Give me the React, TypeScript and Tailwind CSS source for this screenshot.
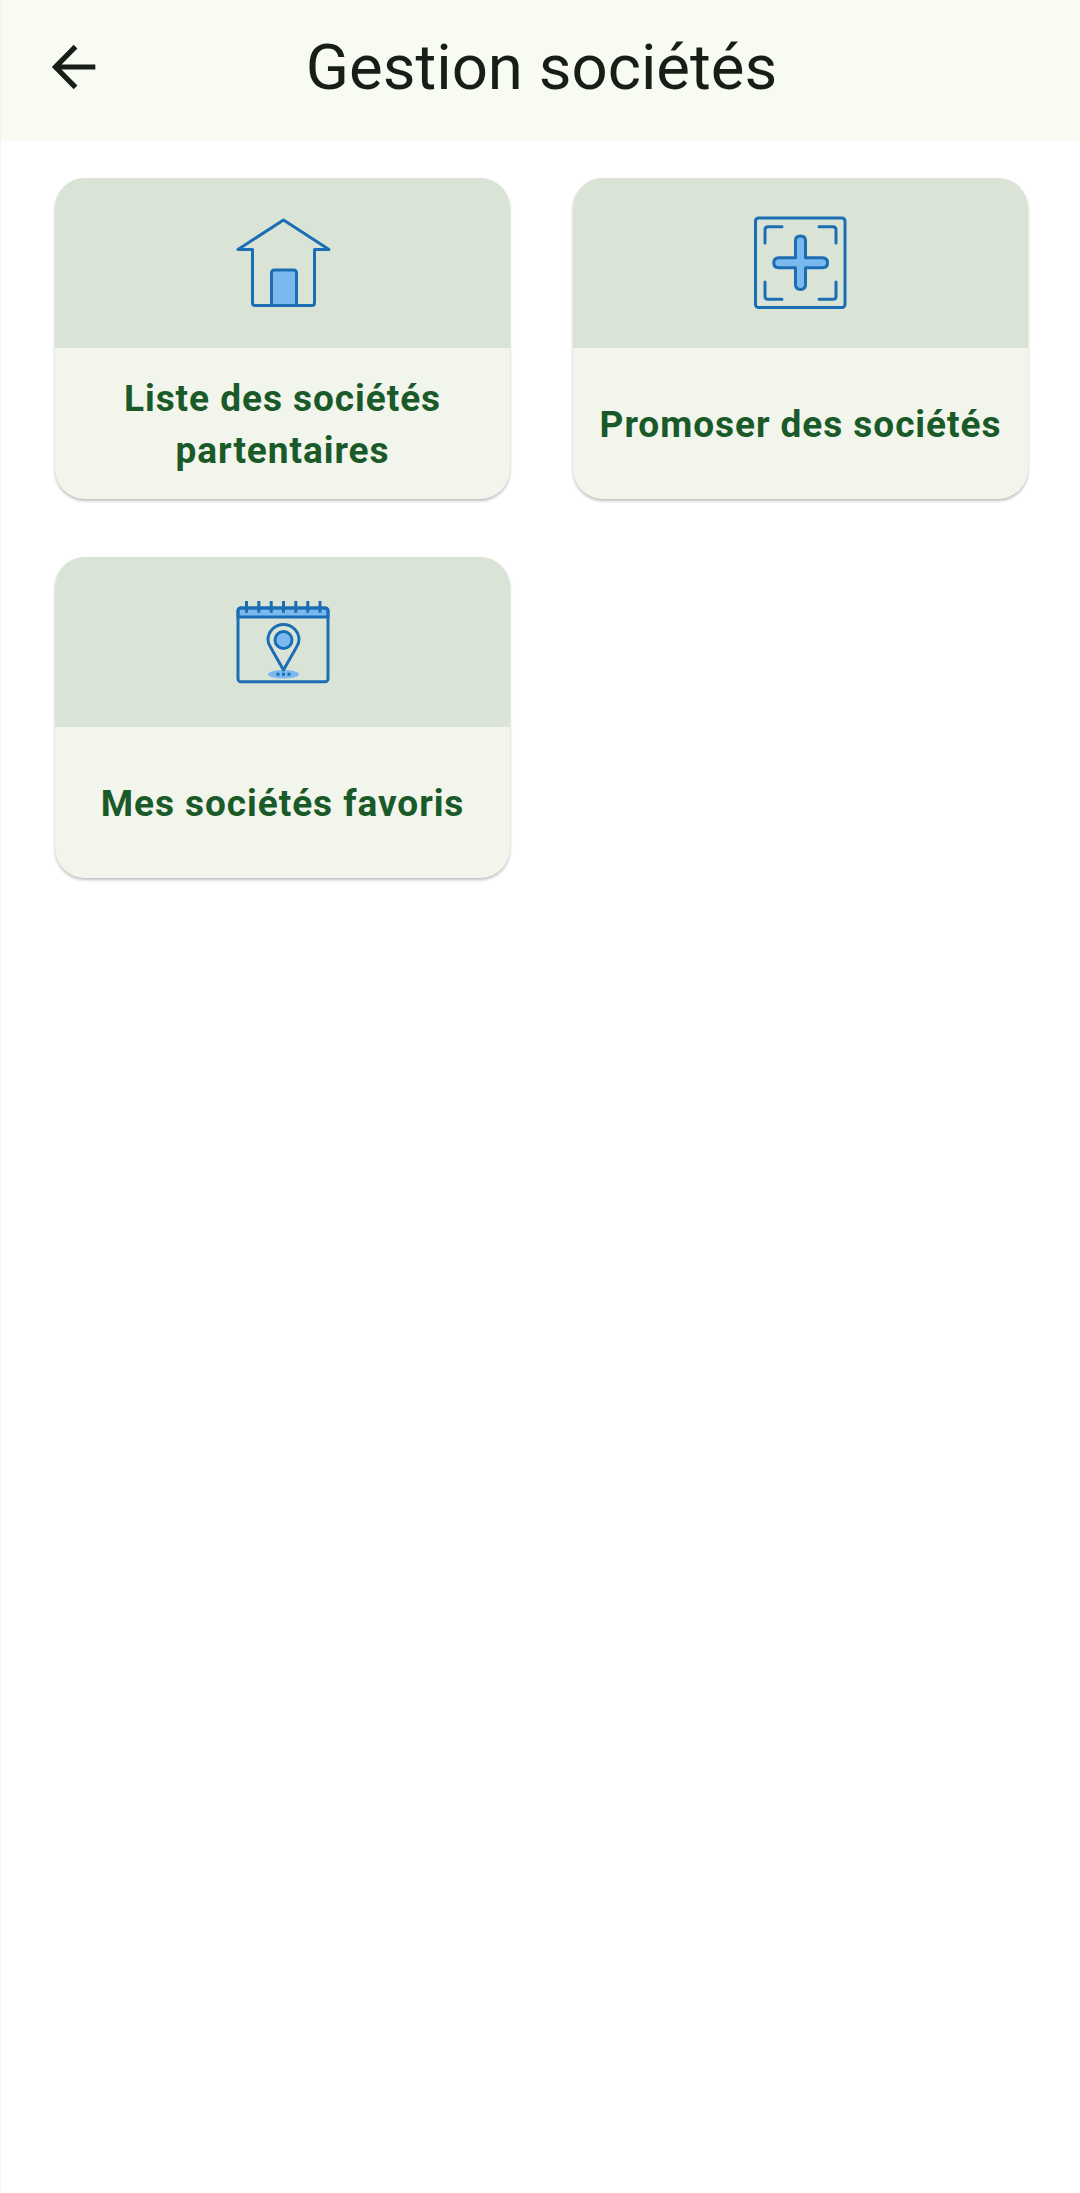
import React from 'react';

const HomeIcon = () => (
  <svg width="96" height="96" viewBox="0 0 96 96" fill="none" stroke="#1c6eb4" strokeWidth="3" strokeLinejoin="round" strokeLinecap="round">
    <path d="M48.5 5 L3 34.5 H17.5 V88 Q17.5 90.5 20 90.5 H77 Q79.5 90.5 79.5 88 V34.5 H94 Z" />
    <path d="M36.5 90.5 V58 Q36.5 55 39.5 55 H58.5 Q61.5 55 61.5 58 V90.5 Z" fill="#7ab8ee" />
  </svg>
);

const AddIcon = () => (
  <svg width="96" height="96" viewBox="0 0 96 96" fill="none" stroke="#1c6eb4" strokeWidth="3" strokeLinejoin="round" strokeLinecap="round">
    <rect x="2.5" y="3" width="89.5" height="89.5" rx="3" />
    <path d="M12 28 V14.7 Q12 11.7 15 11.7 H29 M66 11.7 H80 Q83 11.7 83 14.7 V28 M12 67 V81.3 Q12 84.3 15 84.3 H29 M66 84.3 H80 Q83 84.3 83 81.3 V67" />
    <path
      d="M42.5 25.7 Q42.5 21 47.5 21 Q52.5 21 52.5 25.7 V42.8 H69.5 Q74.5 42.8 74.5 47.8 Q74.5 52.8 69.5 52.8 H52.5 V69.5 Q52.5 74.5 47.5 74.5 Q42.5 74.5 42.5 69.5 V52.8 H25.8 Q20.8 52.8 20.8 47.8 Q20.8 42.8 25.8 42.8 H42.5 Z"
      fill="#7ab8ee"
    />
  </svg>
);

const CalendarIcon = () => (
  <svg width="96" height="96" viewBox="0 0 96 96" fill="none" stroke="#1c6eb4" strokeWidth="3" strokeLinejoin="round" strokeLinecap="round">
    <path d="M3 23 V17 Q3 14 6 14 H90 Q93 14 93 17 V23 Z" fill="#7ab8ee" />
    <rect x="3" y="14" width="90" height="73.7" rx="3" />
    <path d="M11.5 7 V18.7 M23.8 7 V18.7 M36.2 7 V18.7 M48.5 7 V18.7 M60.8 7 V18.7 M72.8 7 V18.7 M85 7 V18.7" strokeLinecap="butt" />
    <ellipse cx="48.5" cy="80.3" rx="15.5" ry="4.3" fill="#7ab8ee" stroke="none" />
    <path d="M41.5 80.3 H55.5" strokeDasharray="3 2.5" strokeLinecap="butt" />
    <path d="M48.5 76 L36 54 Q33 49.5 33 46 A15.5 15.5 0 0 1 64 46 Q64 49.5 61 54 Z" />
    <circle cx="48.5" cy="46" r="8.5" fill="#7ab8ee" />
  </svg>
);

const items = [
  { label: 'Liste des sociétés partentaires', icon: <HomeIcon /> },
  { label: 'Promoser des sociétés', icon: <AddIcon /> },
  { label: 'Mes sociétés favoris', icon: <CalendarIcon /> },
];

export default function App() {
  return (
    <div className="min-h-[2193px] bg-white border-l border-[#f4f4f4] font-['Roboto',sans-serif]">
      <header className="h-[141px] bg-[#f7fbf1] flex items-center pl-[41px] pr-[107px]">
        <svg width="66" height="66" viewBox="0 0 24 24" fill="none" stroke="#191d17" strokeWidth="1.9" className="shrink-0 -mt-[7px]">
          <path d="M19.4 12H5.2 M12.2 4.6 L4.9 12 L12.2 19.4" />
        </svg>
        <h1 className="flex-1 text-center text-[63.5px] leading-[80px] font-normal text-[#191d17] -mt-[5px] pl-[2px]">Gestion sociétés</h1>
      </header>

      <div className="grid grid-cols-2 gap-x-[63px] gap-y-[58px] pl-[54px] pr-[52px] pt-[37px]">
        {items.map((item) => (
          <div key={item.label} className="h-[321px] rounded-[30px] overflow-hidden bg-[#f1f5ec] shadow-[0_2px_3px_rgba(0,0,0,0.25)] flex flex-col">
            <div className="h-[170px] bg-[#d9e4d7] flex items-center justify-center shrink-0">{item.icon}</div>
            <div className="flex-1 flex items-center justify-center px-[20px] pt-[2px]">
              <p className="text-center text-[37px] leading-[52px] tracking-[0.95px] font-bold text-[#1a5928]">{item.label}</p>
            </div>
          </div>
        ))}
      </div>
    </div>
  );
}
